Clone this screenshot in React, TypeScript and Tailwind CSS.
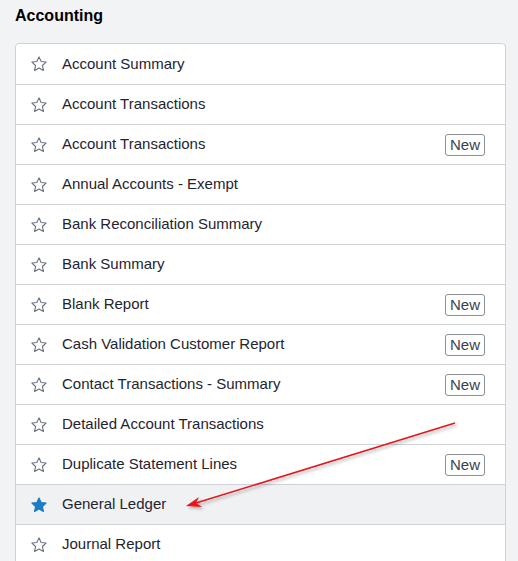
import React from "react";

const reports: { name: string; isNew?: boolean; starred?: boolean }[] = [
  { name: "Account Summary" },
  { name: "Account Transactions" },
  { name: "Account Transactions", isNew: true },
  { name: "Annual Accounts - Exempt" },
  { name: "Bank Reconciliation Summary" },
  { name: "Bank Summary" },
  { name: "Blank Report", isNew: true },
  { name: "Cash Validation Customer Report", isNew: true },
  { name: "Contact Transactions - Summary", isNew: true },
  { name: "Detailed Account Transactions" },
  { name: "Duplicate Statement Lines", isNew: true },
  { name: "General Ledger", starred: true },
  { name: "Journal Report" },
];

function Star({ filled }: { filled?: boolean }) {
  return (
    <svg width="18" height="18" viewBox="0 0 24 24" className="shrink-0">
      <path
        d="M12 2.5l2.9 6.1 6.6.8-4.9 4.6 1.3 6.6L12 17.3l-5.9 3.3 1.3-6.6-4.9-4.6 6.6-.8z"
        fill={filled ? "#1c7cc4" : "none"}
        stroke={filled ? "#1c7cc4" : "#6b7280"}
        strokeWidth="1.5"
        strokeLinejoin="round"
      />
    </svg>
  );
}

export default function App() {
  return (
    <div
      className="relative w-[518px] h-[561px] overflow-hidden bg-[#f2f3f5] text-[#1f2430]"
      style={{ fontFamily: '"Liberation Sans", Arial, sans-serif' }}
    >
      <h1 className="pl-[15px] pt-[6px] text-[16px] font-bold leading-[20px] text-black">
        Accounting
      </h1>
      <div className="ml-[15px] mt-[17px] w-[491px] rounded-t-[4px] border border-[#cfd2d6] bg-white">
        {reports.map((r, i) => (
          <div
            key={i}
            className={`flex h-[40px] items-center pl-[14px] pr-[20px] ${
              i > 0 ? "border-t border-[#cfd2d6]" : ""
            } ${r.starred ? "bg-[#f0f1f3]" : ""}`}
          >
            <Star filled={r.starred} />
            <span className="ml-[14px] flex-1 text-[15px]">{r.name}</span>
            {r.isNew && (
              <span className="rounded-[3px] border border-[#8a8f98] px-[4px] text-[15px] leading-[20px] text-[#3c4250]">
                New
              </span>
            )}
          </div>
        ))}
      </div>
      <svg
        className="absolute left-0 top-0"
        width="518"
        height="561"
        viewBox="0 0 518 561"
      >
        <defs>
          <filter id="sh" x="-10%" y="-10%" width="120%" height="120%">
            <feDropShadow dx="2" dy="2" stdDeviation="1.5" floodColor="#000" floodOpacity="0.3" />
          </filter>
        </defs>
        <g filter="url(#sh)">
          <line x1="455" y1="423" x2="196" y2="503" stroke="#e8161a" strokeWidth="1.6" />
          <path d="M186 506 L199 497 L196 503 L202 507 Z" fill="#e8161a" />
        </g>
      </svg>
    </div>
  );
}
